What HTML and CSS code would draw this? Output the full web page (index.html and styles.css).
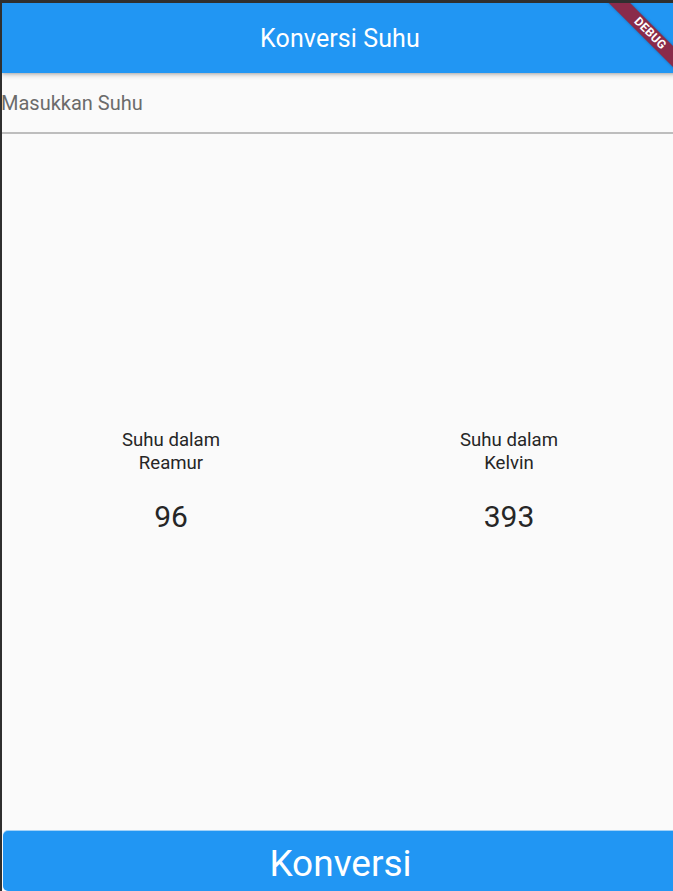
FILE: index.html
```html
<!DOCTYPE html>
<html>
<head>
<meta charset="utf-8">
<link rel="stylesheet" href="styles.css">
</head>
<body>
<div class="frame">
  <div class="app">
    <header class="appbar">
      <h1 class="title">Konversi Suhu</h1>
    </header>
    <div class="field">
      <input class="input" type="text" placeholder="Masukkan Suhu">
    </div>
    <main class="results">
      <div class="col">
        <div class="label">Suhu dalam<br>Reamur</div>
        <div class="value">96</div>
      </div>
      <div class="col">
        <div class="label">Suhu dalam<br>Kelvin</div>
        <div class="value">393</div>
      </div>
    </main>
    <button class="btn">Konversi</button>
    <div class="banner">DEBUG</div>
  </div>
</div>
</body>
</html>
```

FILE: styles.css
```css
html, body {
  margin: 0;
  padding: 0;
  overflow: hidden;
  background: #2f2f2f;
  font-family: Roboto, "Liberation Sans", sans-serif;
}
.frame {
  padding-top: 3px;
  padding-left: 2px;
  width: 676px;
  height: 888px;
}
.app {
  position: relative;
  overflow: hidden;
  width: 676px;
  height: 888px;
  background: #fafafa;
  display: flex;
  flex-direction: column;
}
.appbar {
  height: 70px;
  flex: none;
  background: #2196f3;
  display: flex;
  align-items: center;
  justify-content: center;
  box-shadow: 0 2px 5px rgba(0,0,0,0.22), 0 1px 2px rgba(0,0,0,0.12);
  position: relative;
  z-index: 1;
}
.title {
  margin: 0;
  font-weight: 400;
  font-size: 25px;
  color: #fff;
  letter-spacing: 0.1px;
}
.field {
  height: 59px;
  flex: none;
  border-bottom: 2px solid #bdbdbd;
  display: flex;
  align-items: center;
}
.input {
  border: none;
  outline: none;
  background: transparent;
  font-family: Roboto, "Liberation Sans", sans-serif;
  font-size: 20px;
  padding: 0;
  margin: 1px 0 0 -1px;
  width: 100%;
  color: #212121;
}
.input::placeholder {
  color: #6b6b6b;
}
.results {
  flex: 1;
  display: flex;
  align-items: center;
}
.col {
  flex: 1;
  display: flex;
  flex-direction: column;
  align-items: center;
  text-align: center;
  color: #262626;
}
.label {
  font-size: 18.6px;
  line-height: 23px;
}
.value {
  margin-top: 24px;
  font-size: 30px;
  line-height: 36px;
}
.btn {
  flex: none;
  height: 60px;
  margin: 1px 0 0 1px;
  border: none;
  border-radius: 5px;
  background: #2196f3;
  color: #fff;
  font-family: Roboto, "Liberation Sans", sans-serif;
  font-size: 37px;
  padding: 5px 0 0 0;
  box-shadow: 0 -1px 0 rgba(33,150,243,0.4);
}
.banner {
  position: absolute;
  left: 588px;
  top: 22.5px;
  width: 120px;
  height: 15px;
  line-height: 15px;
  transform: rotate(45deg);
  background: #8a2b4a;
  color: #fff;
  font-size: 12px;
  font-weight: 700;
  text-align: center;
  letter-spacing: 0.3px;
  z-index: 2;
  box-shadow: 0 0 3px rgba(0,0,0,0.3);
}
```
